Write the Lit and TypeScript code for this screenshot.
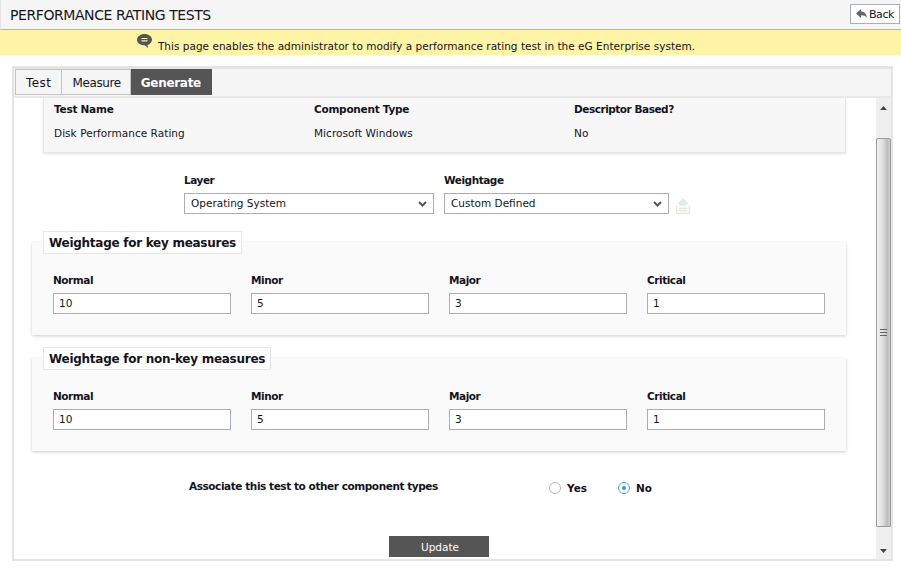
import { LitElement, css, html } from "lit";
import { customElement } from "lit/decorators.js";

const cols = [
  { name: "Normal", value: "10" },
  { name: "Minor", value: "5" },
  { name: "Major", value: "3" },
  { name: "Critical", value: "1" },
];

const chevron = html`<svg class="chev" width="9" height="6" viewBox="0 0 9 6">
  <path d="M1 1l3.5 3.5L8 1" fill="none" stroke="#555" stroke-width="2" />
</svg>`;

@customElement("app-root")
export class AppRoot extends LitElement {
  static styles = css`
    * {
      margin: 0;
      padding: 0;
      box-sizing: border-box;
    }

    :host {
      display: block;
      width: 901px;
      height: 568px;
      overflow: hidden;
      background: #fff;
      color: #14141e;
      font-family: "DejaVu Sans", sans-serif;
      font-size: 10.5px;
    }

    header {
      height: 30px;
      display: flex;
      justify-content: space-between;
      padding: 4px 1px 0 10px;
      background: #f5f5f5;
      border-bottom: 1px solid #b4b4b4;
      border-left: 1px solid #e4e4e4;
    }

    h1 {
      padding-top: 3px;
      margin-left: -1px;
      font-size: 14px;
      font-weight: normal;
      line-height: 16px;
      letter-spacing: -0.42px;
    }

    .back {
      width: 50px;
      height: 20px;
      display: flex;
      align-items: center;
      justify-content: center;
      gap: 2px;
      background: #fff;
      border: 1px solid #a9aebd;
      font-size: 11px;
      letter-spacing: -0.4px;
    }

    .notice {
      height: 25px;
      display: flex;
      justify-content: center;
      padding: 4px 69px 0 0;
      gap: 6px;
      background: #fff3a5;
      line-height: 24px;
      letter-spacing: 0.02px;
    }

    .panel {
      margin: 11px 8px 0 12px;
      height: 495px;
      display: flex;
      flex-direction: column;
      border: 3px solid #e4e4e4;
      border-width: 3px 2px 2px 2px;
    }

    .tabs {
      height: 29px;
      flex: none;
      display: flex;
      background: #f5f5f5;
      border-bottom: 2px solid #e8e8e8;
      padding-left: 1px;
    }

    .tab {
      height: 26px;
      display: flex;
      align-items: center;
      border: 1px solid #c4c4c4;
      font-size: 12px;
      line-height: 14px;
      padding-top: 2px;
    }

    .tab.test {
      padding-left: 10px;
      padding-right: 10px;
      letter-spacing: 0.45px;
    }

    .tab.measure {
      padding-left: 10px;
      padding-right: 9px;
      border-left-width: 0;
      letter-spacing: -0.38px;
    }

    .tab.active {
      padding-left: 10px;
      padding-right: 10px;
      background: #555;
      border-color: #555;
      border-left-width: 0;
      color: #fff;
      font-weight: bold;
      letter-spacing: -0.3px;
    }

    .body {
      flex: 1;
      min-height: 0;
      display: flex;
    }

    .content {
      flex: 1;
      min-width: 0;
      overflow: hidden;
    }

    .card {
      width: 803px;
      height: 55px;
      margin-left: 29px;
      padding: 5px 10px 0;
      display: grid;
      grid-template-columns: 260px 260px 1fr;
      grid-template-rows: 13px 24px;
      row-gap: 11px;
      align-content: start;
      background: #f7f7f7;
      border: 1px solid #e6e6e6;
      border-top: 0;
      box-shadow: 0 1px 2px rgba(0, 0, 0, 0.12);
      letter-spacing: 0.05px;
    }

    .card b {
      font-weight: bold;
      letter-spacing: -0.25px;
    }

    .card b.tight {
      letter-spacing: -0.47px;
    }

    .pick {
      margin: 20px 0 0 170px;
      display: flex;
      gap: 10px;
    }

    .pick label,
    .fields label {
      display: block;
      line-height: 14px;
      font-weight: bold;
      letter-spacing: -0.45px;
      margin-bottom: 6px;
    }

    .layer {
      width: 250px;
    }

    .weight {
      width: 225px;
    }

    .select {
      height: 21px;
      display: flex;
      align-items: center;
      justify-content: space-between;
      padding: 0 6px 2px;
      background: #fff;
      border: 1px solid #a9aebd;
    }

    .chev {
      margin-top: 2px;
    }

    .upload {
      align-self: flex-end;
      margin-left: -3px;
    }

    .box {
      position: relative;
      width: 814px;
      height: 93px;
      margin-left: 18px;
      padding: 31px 0 0 21px;
      background: #fafafa;
      box-shadow: 0 1px 3px rgba(0, 0, 0, 0.2);
    }

    .box + .box {
      margin-top: 23px;
    }

    .first {
      margin-top: 28px;
    }

    .legend {
      position: absolute;
      left: 11px;
      top: -11px;
      height: 23px;
      padding: 0 5px;
      line-height: 22px;
      background: #fff;
      border: 1px solid #e6e6e6;
      font-size: 12px;
      font-weight: bold;
      letter-spacing: -0.27px;
    }

    .fields {
      display: grid;
      grid-template-columns: repeat(4, 178px);
      column-gap: 20px;
    }

    .field {
      height: 21px;
      padding: 0 5px;
      line-height: 19px;
      background: #fff;
      border: 1px solid #a9aebd;
    }

    .assoc {
      margin: 29px 0 0 175px;
      display: flex;
      height: 17px;
      font-weight: bold;
    }

    .assoc .q {
      width: 360px;
      letter-spacing: -0.43px;
    }

    .opt {
      display: flex;
      align-items: center;
      gap: 6px;
      margin-top: 1px;
      height: 14px;
    }

    .opt + .opt {
      margin-left: 31px;
    }

    .radio {
      width: 12px;
      height: 12px;
      border-radius: 50%;
      border: 1px solid #b4b8c4;
      background: #fff;
      display: flex;
      align-items: center;
      justify-content: center;
    }

    .radio.on {
      border-color: #4cb4de;
    }

    .radio.on::after {
      content: "";
      width: 4px;
      height: 4px;
      border-radius: 50%;
      background: #3a9cc8;
    }

    .actions {
      margin-top: 39px;
      display: flex;
      padding-left: 375px;
    }

    .update {
      width: 100px;
      height: 21px;
      display: flex;
      align-items: center;
      justify-content: center;
      padding-left: 2px;
      background: #555;
      color: #fff;
    }

    .scroll {
      flex: none;
      width: 15px;
      display: flex;
      flex-direction: column;
      background: #efefef;
    }

    .arrow {
      height: 17px;
      flex: none;
      display: flex;
      align-items: center;
      justify-content: center;
    }

    .scroll .arrow:first-child svg {
      margin-top: 2px;
    }

    .track {
      flex: 1;
      padding: 23px 0 15px;
      display: flex;
    }

    .thumb {
      flex: 1;
      display: flex;
      align-items: center;
      justify-content: center;
      border: 1px solid #9a9a9a;
      border-radius: 2px 2px 0 0;
      background: linear-gradient(90deg, #f2f2f2 0%, #e2e2e2 40%, #bdbdbd 80%, #d0d0d0 100%);
    }
  `;

  private fieldset(title: string, first: boolean) {
    return html`
      <section class="box ${first ? "first" : ""}">
        <div class="legend">${title}</div>
        <div class="fields">
          ${cols.map(
            (c) => html`<div>
              <label>${c.name}</label>
              <div class="field">${c.value}</div>
            </div>`
          )}
        </div>
      </section>
    `;
  }

  render() {
    return html`
      <header>
        <h1>PERFORMANCE RATING TESTS</h1>
        <div class="back">
          <svg width="11" height="10" viewBox="0 0 11 10">
            <path d="M0 4.500L5 0v2.600c3.500 0 5.500 2.400 6 6.400C9.800 6.900 8 6.200 5 6.200V9z" fill="#666" />
          </svg>
          Back
        </div>
      </header>
      <div class="notice">
        <svg width="15" height="17" viewBox="0 0 15 17">
          <path d="M7.500 0C11.600 0 15 2.500 15 5.700c0 2.600-2 4.500-4.500 5.200l.5 3.100-3.400-2.800C3.300 11.200 0 9 0 5.700 0 2.500 3.400 0 7.500 0z" fill="#555" />
          <path d="M4.500 4.500h6M4.500 6.800h6" stroke="#fff3a5" stroke-width="1.200" />
        </svg>
        <span>This page enables the administrator to modify a performance rating test in the eG Enterprise system.</span>
      </div>
      <div class="panel">
        <nav class="tabs">
          <div class="tab test">Test</div>
          <div class="tab measure">Measure</div>
          <div class="tab active">Generate</div>
        </nav>
        <div class="body">
          <div class="content">
            <div class="card">
              <b>Test Name</b><b>Component Type</b><b class="tight">Descriptor Based?</b>
              <span>Disk Performance Rating</span><span>Microsoft Windows</span><span>No</span>
            </div>
            <div class="pick">
              <div class="layer">
                <label>Layer</label>
                <div class="select">Operating System ${chevron}</div>
              </div>
              <div class="weight">
                <label>Weightage</label>
                <div class="select">Custom Defined ${chevron}</div>
              </div>
              <svg class="upload" width="14" height="16" viewBox="0 0 15 17">
                <path d="M7.500 0L14 6.500h-3V10H4V6.500H1z" fill="#dcf2df" />
                <path d="M.5 8v8.500h14V8" fill="#f9f9f6" stroke="#e2e2de" />
                <path d="M3.500 11h8M3.500 13.500h8" stroke="#e2e2de" />
              </svg>
            </div>
            ${this.fieldset("Weightage for key measures", true)}
            ${this.fieldset("Weightage for non-key measures", false)}
            <div class="assoc">
              <div class="q">Associate this test to other component types</div>
              <div class="opt"><span class="radio"></span>Yes</div>
              <div class="opt"><span class="radio on"></span>No</div>
            </div>
            <div class="actions"><div class="update">Update</div></div>
          </div>
          <div class="scroll">
            <div class="arrow">
              <svg width="7" height="4" viewBox="0 0 7 4"><path d="M3.500 0L7 4H0z" fill="#444" /></svg>
            </div>
            <div class="track">
              <div class="thumb">
                <svg width="7" height="7" viewBox="0 0 7 7">
                  <path d="M0 .5h7M0 3.500h7M0 6.500h7" stroke="#666" />
                </svg>
              </div>
            </div>
            <div class="arrow">
              <svg width="7" height="4" viewBox="0 0 7 4"><path d="M0 0h7L3.500 4z" fill="#444" /></svg>
            </div>
          </div>
        </div>
      </div>
    `;
  }
}
